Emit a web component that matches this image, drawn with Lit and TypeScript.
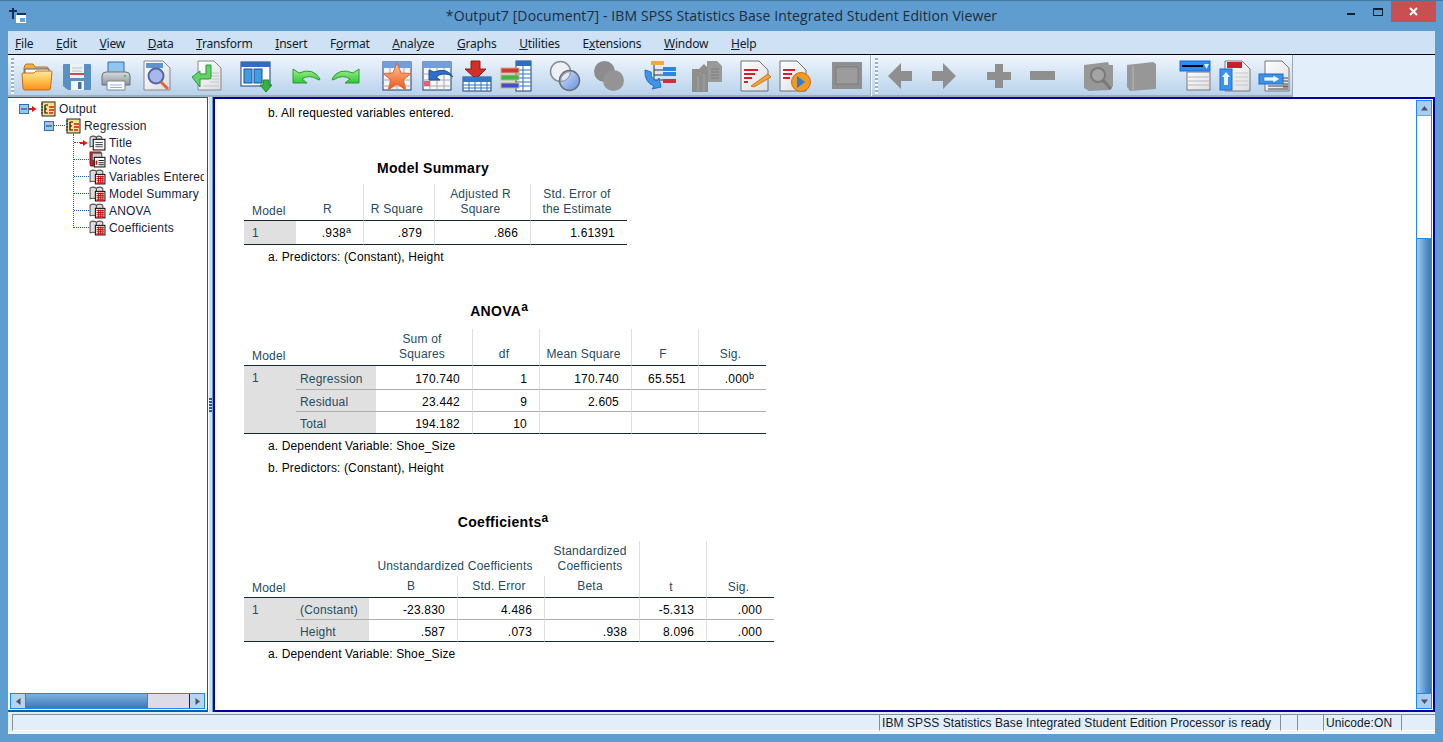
import { LitElement, html, css } from "lit";
import { customElement } from "lit/decorators.js";

const i32 = (body: unknown) => html`<svg class="ti" viewBox="0 0 32 32">${body}</svg>`;
const GR = "#8f8f8f";

const tools: { c: number; icon: unknown }[] = [
  { c: 37, icon: html`<svg class="ti" viewBox="0 0 32 32"><path d="M3 8l1-3q.5-1 2-1h6l2 3h12q1 0 1 1v6H3z" fill="#f4b52c" stroke="#b8761c"/><path d="M4 9h24v6H4z" fill="#fff" stroke="#2f5fd0"/><path d="M1 14q0-1 1-1h11l2-2h15q1 0 1 1l-1.500 16q0 2-2 2H4q-2 0-2-2z" fill="url(#fo)" stroke="#c66a14"/></svg>` },
  { c: 77, icon: html`<svg class="ti" viewBox="0 0 32 32"><path d="M3 4h26q1 0 1 1v24q0 1-1 1H7l-5-4V5q0-1 1-1z" fill="#5a8fc2"/><rect x="9" y="4" width="14" height="14" fill="#eef1f6"/><path d="M11 8h10M11 11h10" stroke="#b9c2cc"/><rect x="9" y="13" width="14" height="2" fill="#d8455a"/><rect x="10" y="21" width="13" height="9" fill="#f3f6fa"/><rect x="17" y="22" width="3.500" height="7" fill="#3f75aa"/></svg>` },
  { c: 116, icon: html`<svg class="ti" viewBox="0 0 32 32"><path d="M8 2h16v12H8z" fill="#8fc6f0" stroke="#3b6ea5"/><path d="M2 16q0-4 4-4h20q4 0 4 4v9H2z" fill="url(#pr)" stroke="#6b7177"/><rect x="24" y="15" width="2" height="2" fill="#4fc04f"/><path d="M7 21h18v9H7z" fill="#fff" stroke="#7d8489"/><path d="M10 25h12M10 27.500h12" stroke="#8ab4dc"/></svg>` },
  { c: 157, icon: html`<svg class="ti" viewBox="0 0 32 32"><path d="M3 1h19l7 7v22H3z" fill="url(#pa)" stroke="#85888c"/><rect x="5" y="3" width="17" height="5" fill="#5d93cf"/><circle cx="15" cy="16" r="7.500" fill="#a9b8ea" stroke="#5566a8" stroke-width="2"/><path d="M20 22l7 7" stroke="#e2653f" stroke-width="3"/></svg>` },
  { c: 207, icon: html`<svg class="ti" viewBox="0 0 32 32"><path d="M7 1h16l7 7v22H7z" fill="url(#pa)" stroke="#85888c"/><path d="M19 13h9M19 16h9M19 19h9M19 22h9M12 26h16" stroke="#c3c6ca"/><path d="M1 17l8-6v3h6V5h5v12q0 2-2 2h-9v8z" fill="#66d16b" stroke="#279a35"/></svg>` },
  { c: 256, icon: html`<svg class="ti" viewBox="0 0 32 32"><rect x="1" y="2" width="29" height="24" fill="#fff" stroke="#1d3f78"/><rect x="1" y="2" width="29" height="5" fill="#2f6dc0"/><rect x="4" y="9" width="8" height="14" fill="#3e9ee0" stroke="#1d4f98"/><rect x="14" y="9" width="8" height="14" fill="#3e9ee0" stroke="#1d4f98"/><path d="M23 20h6v5h3l-6 7-6-7h3z" fill="#35b23f" stroke="#1f8a2b"/></svg>` },
  { c: 306, icon: html`<svg class="ti" viewBox="0 0 32 32"><path d="M3 9v14h14l-5-4q7-5 16 0.500q2 1 2-.500Q23 7 9 13z" fill="url(#gr)" stroke="#2a9a30"/></svg>` },
  { c: 346, icon: html`<svg class="ti" viewBox="0 0 32 32"><path d="M29 9v14H15l5-4q-7-5-16 0.500q-2 1-2-.500Q9 7 23 13z" fill="url(#gr)" stroke="#2a9a30"/></svg>` },
  { c: 397, icon: html`<svg class="ti" viewBox="0 0 32 32"><rect x="2" y="2" width="28" height="28" fill="#f4f4f4" stroke="#1d3f78"/><rect x="2" y="2" width="28" height="6" fill="#6f9fdc"/><path d="M2 14h28M2 20h28M2 26h28M9 8v22M16 8v22M23 8v22" stroke="#a9a9a9"/><path d="M16 3l4 10 10 .500-8 6.500 3 10-9-6-9 6 3-10-8-6.500 10-.500z" fill="url(#st)" stroke="#d86a3a"/></svg>` },
  { c: 437, icon: html`<svg class="ti" viewBox="0 0 32 32"><rect x="2" y="2" width="28" height="28" fill="#f7f7f7" stroke="#1d3f78"/><rect x="2" y="2" width="28" height="6" fill="#6f9fdc"/><path d="M2 14h28M2 20h28M2 26h28M9 8v22M16 8v22M23 8v22" stroke="#a9a9a9"/><rect x="3" y="21" width="6" height="5" fill="#ea5c78"/><path d="M8 10v10h11l-4-3q6-5 14-2l3 2Q26 7 13 12z" fill="#2f6fd0" stroke="#1d4f98"/></svg>` },
  { c: 477, icon: html`<svg class="ti" viewBox="0 0 32 32"><path d="M10 1h9v8h6L15 19 4 9h6z" fill="#cf3028" stroke="#8f1c18"/><rect x="2" y="17" width="28" height="14" fill="#fff" stroke="#1d3f78"/><rect x="2" y="17" width="28" height="5" fill="#3277c8"/><path d="M2 25h28M2 28h28M8 22v9M14 22v9M20 22v9M26 22v9" stroke="#2d72c8"/></svg>` },
  { c: 516, icon: html`<svg class="ti" viewBox="0 0 32 32"><rect x="16" y="1" width="15" height="30" fill="#fff" stroke="#1d3f78"/><rect x="16" y="1" width="15" height="5" fill="#2f6dc0"/><path d="M16 10h15M16 14h15M16 18h15M16 22h15M16 26h15M23 6v25" stroke="#2d72c8"/><rect x="1" y="8" width="18" height="5" fill="#d8343c" stroke="#c9b27e"/><rect x="1" y="15" width="18" height="5" fill="#41b548" stroke="#c9b27e"/><rect x="1" y="23" width="18" height="5" fill="#3b52c8" stroke="#c9b27e"/></svg>` },
  { c: 565, icon: html`<svg class="ti" viewBox="0 0 32 32"><circle cx="11.500" cy="11.500" r="10" fill="#edf0f7" stroke="#878b91" stroke-width="1.500"/><circle cx="20.500" cy="20.500" r="10" fill="url(#ci)" stroke="#6b7078" stroke-width="1.500"/><path d="M11.500 21.500a10 10 0 0 1 10-10 10 10 0 0 1-10 10z" fill="#dfe6f5" stroke="#878b91"/></svg>` },
  { c: 609, icon: html`<svg class="ti" viewBox="0 0 32 32"><circle cx="11.500" cy="11.500" r="10.500" fill="#8c8c8c"/><circle cx="20.500" cy="20.500" r="10.500" fill="#949494"/></svg>` },
  { c: 660, icon: html`<svg class="ti" viewBox="0 0 32 32"><rect x="7" y="1" width="13" height="4" fill="#f4a93a"/><path d="M10 5v20M10 10h9M10 15h9M10 20h9" stroke="#333"/><rect x="19" y="7" width="13" height="4" fill="#2e86e0"/><rect x="19" y="12" width="13" height="4" fill="#2e86e0"/><rect x="19" y="19" width="13" height="4" fill="#c8303a"/><path d="M1 10q-1 12 9 16l-2 3 9-2-2-9-2 3q-6-1-6-9z" fill="#3d95e8" stroke="#2a6fc0"/></svg>` },
  { c: 707, icon: html`<svg class="ti" viewBox="0 0 32 32"><path d="M16 1h10l5 5v16H16z" fill="#999"/><path d="M20 9h8M20 12h8M20 15h8M20 18h8" stroke="#7c7c7c"/><path d="M1 9h7l5-5 4 4v24H1z" fill="#8e8e8e"/><path d="M7 16v15M13 14v17" stroke="#a6a6a6"/></svg>` },
  { c: 755, icon: html`<svg class="ti" viewBox="0 0 32 32"><path d="M2 1h18l9 9v21H2z" fill="url(#pa)" stroke="#6d7074"/><path d="M5 10h14M5 14h11M5 18h8M5 22h4" stroke="#d61f2c" stroke-width="2"/><path d="M12 26l17-12 3 3-17 10z" fill="#f2a23c" stroke="#c97a1c"/></svg>` },
  { c: 795, icon: html`<svg class="ti" viewBox="0 0 32 32"><path d="M1 1h17l9 9v21H1z" fill="url(#pa)" stroke="#6d7074"/><path d="M4 10h12M4 14h9M4 18h7" stroke="#d61f2c" stroke-width="2"/><circle cx="22" cy="22" r="9.500" fill="#f09a24" stroke="#c26f12"/><path d="M18 16l8 6-8 6z" fill="#2b7ed6"/></svg>` },
  { c: 847, icon: html`<svg class="ti" viewBox="0 0 32 32"><rect x="1" y="2" width="30" height="27" fill="#8f8f8f"/><rect x="5" y="7" width="22" height="17" fill="#9c9c9c" stroke="#7c7c7c"/></svg>` },
];
const tools2: { c: number; icon: unknown }[] = [
  { c: 900, icon: i32(html`<svg x="0" y="0" width="32" height="32" viewBox="0 0 32 32"><path d="M4 16L17 3v8h11v10H17v8z" fill="${GR}"/></svg>`) },
  { c: 944, icon: i32(html`<svg x="0" y="0" width="32" height="32" viewBox="0 0 32 32"><path d="M28 16L15 3v8H4v10h11v8z" fill="${GR}"/></svg>`) },
  { c: 999, icon: i32(html`<svg x="0" y="0" width="32" height="32" viewBox="0 0 32 32"><path d="M12 4h8v8h8v8h-8v8h-8v-8H4v-8h8z" fill="${GR}"/></svg>`) },
  { c: 1042, icon: i32(html`<svg x="0" y="0" width="32" height="32" viewBox="0 0 32 32"><rect x="4" y="11" width="25" height="9" fill="${GR}"/></svg>`) },
  { c: 1098, icon: html`<svg class="ti" viewBox="0 0 32 32"><path d="M2 5l24-3 1 3h4v21l-3 4-21 1-5-3z" fill="#979797"/><circle cx="16" cy="15" r="7" fill="#a4a4a4" stroke="#7a7a7a" stroke-width="2"/><path d="M21 20l8 9" stroke="#7a7a7a" stroke-width="3"/></svg>` },
  { c: 1141, icon: html`<svg class="ti" viewBox="0 0 32 32"><path d="M2 5l26-3 3 2v25l-26 2-3-4z" fill="#979797"/><path d="M8 6v24" stroke="#a8a8a8" stroke-width="2"/></svg>` },
  { c: 1195, icon: html`<svg class="ti" viewBox="0 0 32 32"><rect x="8" y="12" width="23" height="18" fill="url(#pa)" stroke="#777"/><path d="M8 17h23M8 21h23M8 25h23" stroke="#b8b8b8"/><rect x="1" y="1" width="30" height="10" fill="#2e8bf0" stroke="#1a6ad0"/><rect x="3" y="5" width="21" height="2" fill="#000"/><path d="M25 4h5l-2.500 5z" fill="#dfefff"/></svg>` },
  { c: 1235, icon: html`<svg class="ti" viewBox="0 0 32 32"><path d="M6 1h17l8 8v22H6z" fill="url(#pa)" stroke="#777"/><rect x="8" y="2" width="15" height="6" fill="#c8202a"/><path d="M16 13h13M16 17h13M16 21h13M16 25h13" stroke="#c8c8c8"/><rect x="1" y="9" width="12" height="21" fill="#3b93ee" stroke="#1a6ad0"/><path d="M7 12l4 5H9v8H5v-8H3z" fill="#e8f4ff"/></svg>` },
  { c: 1274, icon: html`<svg class="ti" viewBox="0 0 32 32"><path d="M7 1h17l7 7v23H7z" fill="url(#pa)" stroke="#777"/><path d="M25 18h5M25 21h5M25 24h5M25 27h5M10 26h20M10 29h20" stroke="#444"/><rect x="1" y="14" width="24" height="10" fill="#3b93ee" stroke="#1a6ad0"/><path d="M6 17h9v-2l7 4-7 4v-2H6z" fill="#e8f4ff" stroke="#1a6ad0" stroke-width=".5"/></svg>` },
];

const menu: [string, string, string][] = [
  ["", "F", "ile"], ["", "E", "dit"], ["", "V", "iew"], ["", "D", "ata"], ["", "T", "ransform"],
  ["", "I", "nsert"], ["F", "o", "rmat"], ["", "A", "nalyze"], ["", "G", "raphs"], ["", "U", "tilities"],
  ["E", "x", "tensions"], ["", "W", "indow"], ["", "H", "elp"],
];

const bookE = html`<svg class="tri" viewBox="0 0 16 16"><rect x="2" y="1" width="13" height="14" fill="#fbe08c" stroke="#222"/><path d="M3 3h-2M3 6h-2M3 9h-2M3 12h-2" stroke="#222"/><path d="M5 4v8h3M5 4h3M5 8h2" stroke="#111" fill="none" stroke-width="1.200"/><path d="M9 6h5M9 9h5M9 12h4" stroke="#e01818" stroke-width="1.600"/></svg>`;
const arrow = html`<svg class="arr" viewBox="0 0 8 8"><path d="M0 3h3V1l4.500 3L3 7V5H0z" fill="#ee1111"/></svg>`;
const exp = html`<svg class="exp" viewBox="0 0 10 10"><rect x=".5" y=".5" width="9" height="9" fill="#9cc6ee" stroke="#2f6fb8"/><path d="M2 5h6" stroke="#16365f"/></svg>`;
const leafT = html`<svg class="trl" viewBox="0 0 16 16"><path d="M1 3q3-2 6 0v9q-3-1-6 0z" fill="#ddd" stroke="#555"/><path d="M7 3q2-2 5 0v2H7z" fill="#ddd" stroke="#555"/><rect x="4" y="5" width="11" height="10" fill="#fff" stroke="#111"/><path d="M6 8h7M6 10h7M6 12h7" stroke="#555"/></svg>`;
const leafN = html`<svg class="trl" viewBox="0 0 16 16"><path d="M1 1h10v3H4v10H2q-1 0-1-2z" fill="#d82020" stroke="#801010"/><rect x="3" y="2" width="9" height="7" fill="#ccc" stroke="#555"/><rect x="5" y="6" width="10" height="9" fill="#fff" stroke="#111"/><path d="M7 9v4" stroke="#d01010" stroke-width="1.500"/><path d="M9 9h5M9 11h5M9 13h5" stroke="#222"/></svg>`;
const leafG = html`<svg class="trl" viewBox="0 0 16 16"><path d="M1 3q3-2 6 0v10q-3-1-6 0z" fill="#ddd" stroke="#555"/><path d="M7 3q3-2 6 0v4H7z" fill="#ddd" stroke="#555"/><rect x="6" y="6" width="9" height="9" fill="#fff" stroke="#111"/><path d="M7 8h7M7 10h7M7 12h7M7 14h7M9 7v8M11 7v8M13 7v8" stroke="#cc1414"/></svg>`;

const leaves: { icon: unknown; t: string; mark?: boolean }[] = [
  { icon: leafT, t: "Title", mark: true },
  { icon: leafN, t: "Notes" },
  { icon: leafG, t: "Variables Entered" },
  { icon: leafG, t: "Model Summary" },
  { icon: leafG, t: "ANOVA" },
  { icon: leafG, t: "Coefficients" },
];

@customElement("app-root")
export class AppRoot extends LitElement {
  static styles = css`
    :host { display: block; width: 1443px; height: 742px; overflow: hidden; }
    * { box-sizing: border-box; }
    .win { width: 1443px; height: 742px; display: flex; flex-direction: column; background: #5f9dd1; padding: 0 8px 8px; border-top: 1px solid #47799f; font-family: "Liberation Sans", Arial, sans-serif; font-size: 12px; color: #000; }
    .defs { width: 0; height: 0; display: block; }
    .title { height: 30px; flex: none; display: flex; align-items: flex-start; margin: 0 -8px; padding-left: 9px; }
    .appicon { width: 18px; height: 18px; margin-top: 6px; flex: none; }
    .tt { flex: 1; text-align: center; font: 14px/30px "Open Sans", "Noto Sans", sans-serif; color: #1d2c3a; padding-left: 88px; letter-spacing: .1px; }
    .wb { display: flex; align-items: flex-start; width: 108px; flex: none; margin-right: 7px; }
    .wmin { width: 18px; height: 3px; margin: 12px 0 0 14px; flex: none; }
    .wmin i { display: block; width: 8px; height: 2px; background: #14202c; margin-left: 5px; }
    .wmax { width: 10px; height: 8px; border: 1px solid #14202c; border-top-width: 2px; margin: 7px 8px 0 13px; flex: none; }
    .wx { width: 45px; height: 21px; background: #c75050; color: #fff; display: flex; align-items: center; justify-content: center; flex: none; }
    .wx svg { width: 9px; height: 9px; }
    .menu { height: 24px; flex: none; background: #cfe1f5; border-bottom: 1px solid #000; display: flex; gap: 22.7px; padding: 5px 0 0 7px; font: 12px/15px "Noto Sans", sans-serif; letter-spacing: -.2px; color: #111c2e; }
    .bar { height: 42px; flex: none; display: flex; background: #e3eefb; }
    .tools { width: 1285px; flex: none; display: flex; align-items: center; padding-top: 1px; background: linear-gradient(#f0f6fd, #b8d2eb); border-right: 1px solid #9ba8b5; border-bottom: 2px solid #a4aeb8; }
    .grip { width: 3px; height: 36px; margin-left: 3px; flex: none; background: repeating-linear-gradient(#9fb0c0 0 2px, #f8fbff 2px 4px); }
    .ti { width: 32px; height: 32px; flex: none; display: block; }
    .sep { width: 2px; height: 41px; background: #fafcff; border-left: 1px solid #9fb0c0; flex: none; }
    .main { flex: 1; min-height: 0; display: flex; }
    .left { width: 200px; flex: none; background: #fff; border-bottom: 2px solid #0a5ea8; border-right: 1px solid #0a5ea8; border-top: 1px solid #0a5ea8; display: flex; flex-direction: column; }
    .tree { flex: 1; min-height: 0; padding-top: 2px; color: #171c3a; overflow: hidden; letter-spacing: .2px; }
    .tr { height: 17px; display: flex; align-items: center; white-space: nowrap; overflow: hidden; }
    .exp { width: 10px; height: 10px; flex: none; }
    .arr { width: 8px; height: 8px; flex: none; }
    .tri { width: 16px; height: 16px; flex: none; }
    .trl { width: 17px; height: 17px; flex: none; }
    .r0 { padding-left: 11px; }
    .r0 .tri { margin: 0 3px 0 3px; }
    .r1 { padding-left: 36px; }
    .r1 .dots { width: 11px; }
    .r1 .tri { margin-right: 3px; }
    .dots { border-top: 1px dotted #2060b0; height: 0; flex: none; }
    .leafs { margin-left: 65px; border-left: 1px dotted #2060b0; height: 94px; margin-bottom: -8px; }
    .lf { height: 17px; display: flex; align-items: center; white-space: nowrap; width: 130px; overflow: hidden; }
    .lf .dots { width: 15px; }
    .lf .dots.s { width: 6px; }
    .lf .trl { margin: 0 3px 0 0; }
    .lf .arr { margin-right: 1px; }
    .hs { height: 16px; flex: none; margin: 0 2px 1px 2px; display: flex; border: 1px solid #1a8af0; background: #dcdbe6; }
    .hb { width: 14px; flex: none; background: #b7d3ee; display: flex; align-items: center; justify-content: center; }
    .hthumb { width: 123px; flex: none; background: linear-gradient(#7fb1e0, #5c95ca 50%, #3a78b9); border-left: 1px solid #1a8af0; border-right: 1px solid #1a8af0; }
    .htrack { flex: 1; border-right: 1px solid #223; }
    .split { width: 5px; flex: none; background: #cfe1f5; border-left: 1px solid #fff; border-right: 1px solid #5f9dd1; display: flex; align-items: center; }
    .split i { display: block; width: 3px; height: 14px; background: repeating-linear-gradient(#1f5d9c 0 2px, #cfe1f5 2px 3px); }
    .right { flex: 1; min-width: 0; background: #fff; border: 2px solid #0000a0; display: flex; padding: 1px; }
    .doc { flex: 1; min-width: 0; padding: 6px 0 0 28px; overflow: hidden; }
    .vs { width: 16px; flex: none; display: flex; flex-direction: column; border: 1px solid #1a8af0; background: #fff; }
    .vb { height: 14px; flex: none; background: #a9cdf2; display: flex; align-items: center; justify-content: center; }
    .vb svg, .hb svg { display: block; }
    .vtrack { height: 123px; flex: none; background: #fff; border-top: 1px solid #7ab; }
    .vthumb { flex: 1; background: linear-gradient(90deg, #a7cbec, #4f8cc5 70%, #3a78b9); border-top: 1px solid #1a8af0; border-bottom: 1px solid #1a8af0; }
    .note { height: 15px; line-height: 15px; padding-left: 24px; color: #010205; letter-spacing: .13px; white-space: nowrap; }
    .fn { margin-top: 5px; }
    .n2 { margin-top: 7px; }
    .h { font-weight: 700; font-size: 14px; line-height: 16px; height: 16px; text-align: center; color: #010205; white-space: nowrap; padding-right: 5px; letter-spacing: .3px; }
    .h sup { font-size: 12px; line-height: 0; vertical-align: 5px; letter-spacing: 0; }
    .hMS { margin-top: 39px; margin-bottom: 8px; width: 383px; }
    .hAN { margin-top: 38px; margin-bottom: 10px; width: 522px; padding-right: 12px; }
    .hCO { margin-top: 38px; margin-bottom: 11px; width: 530px; padding-right: 12px; }
    table { border-collapse: separate; border-spacing: 0; table-layout: fixed; letter-spacing: .2px; }
    th { font-weight: 400; color: #264a60; line-height: 15px; padding: 0 4px 3px 0; text-align: center; vertical-align: bottom; white-space: nowrap; border-right: 1px solid #e0e0e0; border-bottom: 1px solid #152935; }
    th.l { text-align: left; padding-left: 8px; padding-bottom: 1px; border-right: 0; }
    th.low { padding-bottom: 2px; }
    th.nb, td.nb, th:last-child, td:last-child { border-right: 0; }
    th.nbb { border-bottom: 0; }
    td { color: #010205; text-align: right; padding: 3px 12px 0 0; border-right: 1px solid #e0e0e0; border-bottom: 1px solid #aeaeae; line-height: 15px; white-space: nowrap; }
    tr:last-child td { border-bottom-color: #152935; }
    td.m, td.lb { text-align: left; color: #264a60; background: #e0e0e0; border-right: 0; }
    td.m { padding-left: 8px; vertical-align: top; padding-top: 5px; border-bottom-color: #152935; }
    td.lb { padding-left: 4px; border-bottom-color: #aeaeae; }
    tr:last-child td.lb { border-bottom-color: #152935; }
    tr.ms td { padding-top: 1px; vertical-align: middle; }
    td sup { font-size: 9px; line-height: 0; vertical-align: 4px; letter-spacing: 0; }
    .status { height: 22px; flex: none; background: #e3eefb; display: flex; padding: 2px 0 1px 4px; border-bottom: 2px solid #f4f8fd; }
    .sc { border-left: 1px solid #8a8f94; border-top: 1px solid #8a8f94; border-bottom: 1px solid #fff; line-height: 16px; padding-left: 2px; white-space: nowrap; color: #101828; letter-spacing: .08px; flex: none; }
    .grow { flex: 1; }
  `;

  private place(list: { c: number; icon: unknown }[], start: number) {
    let x = start;
    return list.map((t) => {
      const m = t.c - 16 - x;
      x = t.c + 16;
      return html`<div style="margin-left:${m}px">${t.icon}</div>`;
    });
  }

  private tri(d: string) {
    return html`<svg width="9" height="9" viewBox="0 0 9 9"><path d="${d}" fill="#4a5560"/></svg>`;
  }

  render() {
    return html`<div class="win">
      <svg class="defs">
        <defs>
          <linearGradient id="fo" x1="0" y1="0" x2="0" y2="1"><stop offset="0" stop-color="#ffe9a0"/><stop offset=".5" stop-color="#ffc24e"/><stop offset="1" stop-color="#fb8d1e"/></linearGradient>
          <linearGradient id="pr" x1="0" y1="0" x2="0" y2="1"><stop offset="0" stop-color="#d6dbe0"/><stop offset="1" stop-color="#8d949b"/></linearGradient>
          <linearGradient id="pa" x1="0" y1="0" x2="1" y2="1"><stop offset="0" stop-color="#fff"/><stop offset="1" stop-color="#dcdde0"/></linearGradient>
          <linearGradient id="gr" x1="0" y1="0" x2="0" y2="1"><stop offset="0" stop-color="#a2ee8c"/><stop offset="1" stop-color="#2fc83a"/></linearGradient>
          <linearGradient id="st" x1="0" y1="0" x2="0" y2="1"><stop offset="0" stop-color="#fbc9a0"/><stop offset="1" stop-color="#f2530e"/></linearGradient>
          <linearGradient id="ci" x1="0" y1="0" x2="1" y2="1"><stop offset="0" stop-color="#dbe6fa"/><stop offset="1" stop-color="#5f8fe0"/></linearGradient>
        </defs>
      </svg>
      <div class="title">
        <svg class="appicon" viewBox="0 0 18 18"><path d="M4 1v11M0 4h8" stroke="#10305a" stroke-width="2"/><path d="M8 6h9v2H8z" fill="#12345e"/><rect x="7" y="8" width="10" height="8" fill="#fff"/><rect x="11" y="11" width="5" height="4" fill="#6aa3d8"/></svg>
        <div class="tt">*Output7 [Document7] - IBM SPSS Statistics Base Integrated Student Edition Viewer</div>
        <div class="wb">
          <div class="wmin"><i></i></div>
          <div class="wmax"></div>
          <div class="wx"><svg viewBox="0 0 9 9"><path d="M1 1l7 7M8 1l-7 7" stroke="#fff" stroke-width="2"/></svg></div>
        </div>
      </div>
      <div class="menu">${menu.map((m) => html`<span>${m[0]}<u>${m[1]}</u>${m[2]}</span>`)}</div>
      <div class="bar">
        <div class="tools">
          <div class="grip"></div>
          ${this.place(tools, 14)}
          <div class="sep" style="margin-left:7px"></div>
          <div class="grip"></div>
          ${this.place(tools2, 878)}
        </div>
      </div>
      <div class="main">
        <div class="left">
          <div class="tree">
            <div class="tr r0">${exp}${arrow}${bookE}<span>Output</span></div>
            <div class="tr r1">${exp}<span class="dots"></span>${bookE}<span>Regression</span></div>
            <div class="leafs">
              ${leaves.map((l) => html`<div class="lf">
                ${l.mark ? html`<span class="dots s"></span>${arrow}` : html`<span class="dots"></span>`}
                ${l.icon}<span>${l.t}</span>
              </div>`)}
            </div>
          </div>
          <div class="hs">
            <div class="hb">${this.tri("M2 4.500L6.500 1v7z")}</div>
            <div class="hthumb"></div>
            <div class="htrack"></div>
            <div class="hb">${this.tri("M7 4.500L2.500 1v7z")}</div>
          </div>
        </div>
        <div class="split"><i></i></div>
        <div class="right">
          <div class="doc">
            <div class="note">b. All requested variables entered.</div>

            <div class="h hMS">Model Summary</div>
            <table style="width:383px">
              <colgroup><col style="width:52px"/><col style="width:68px"/><col style="width:71px"/><col style="width:96px"/><col style="width:96px"/></colgroup>
              <tr style="height:37px"><th class="l">Model</th><th>R</th><th>R Square</th><th>Adjusted R<br/>Square</th><th>Std. Error of<br/>the Estimate</th></tr>
              <tr class="ms" style="height:24px"><td class="m">1</td><td>.938<sup>a</sup></td><td>.879</td><td>.866</td><td>1.61391</td></tr>
            </table>
            <div class="note fn">a. Predictors: (Constant), Height</div>

            <div class="h hAN">ANOVA<sup>a</sup></div>
            <table style="width:522px">
              <colgroup><col style="width:52px"/><col style="width:80px"/><col style="width:97px"/><col style="width:67px"/><col style="width:92px"/><col style="width:67px"/><col style="width:67px"/></colgroup>
              <tr style="height:37px"><th class="l" colspan="2">Model</th><th>Sum of<br/>Squares</th><th>df</th><th>Mean Square</th><th>F</th><th>Sig.</th></tr>
              <tr style="height:24px"><td class="m" rowspan="3">1</td><td class="lb">Regression</td><td>170.740</td><td>1</td><td>170.740</td><td>65.551</td><td>.000<sup>b</sup></td></tr>
              <tr style="height:22px"><td class="lb">Residual</td><td>23.442</td><td>9</td><td>2.605</td><td></td><td></td></tr>
              <tr style="height:22px"><td class="lb">Total</td><td>194.182</td><td>10</td><td></td><td></td><td></td></tr>
            </table>
            <div class="note fn">a. Dependent Variable: Shoe_Size</div>
            <div class="note n2">b. Predictors: (Constant), Height</div>

            <div class="h hCO">Coefficients<sup>a</sup></div>
            <table style="width:530px">
              <colgroup><col style="width:52px"/><col style="width:73px"/><col style="width:89px"/><col style="width:87px"/><col style="width:95px"/><col style="width:67px"/><col style="width:67px"/></colgroup>
              <tr style="height:35px"><th class="l" colspan="2" rowspan="2">Model</th><th class="nb nbb" colspan="2" style="padding-bottom:2px">Unstandardized Coefficients</th><th class="nbb" style="padding-bottom:2px">Standardized<br/>Coefficients</th><th class="nbb"></th><th class="nbb"></th></tr>
              <tr style="height:22px"><th>B</th><th>Std. Error</th><th>Beta</th><th class="low">t</th><th class="low">Sig.</th></tr>
              <tr style="height:22px"><td class="m" rowspan="2">1</td><td class="lb">(Constant)</td><td>-23.830</td><td>4.486</td><td></td><td>-5.313</td><td>.000</td></tr>
              <tr style="height:22px"><td class="lb">Height</td><td>.587</td><td>.073</td><td>.938</td><td>8.096</td><td>.000</td></tr>
            </table>
            <div class="note fn">a. Dependent Variable: Shoe_Size</div>
          </div>
          <div class="vs">
            <div class="vb">${this.tri("M4.500 2L8 6.500H1z")}</div>
            <div class="vtrack"></div>
            <div class="vthumb"></div>
            <div class="vb">${this.tri("M4.500 7L8 2.500H1z")}</div>
          </div>
        </div>
      </div>
      <div class="status">
        <div class="sc grow"></div>
        <div class="sc" style="width:401px">IBM SPSS Statistics Base Integrated Student Edition Processor is ready</div>
        <div class="sc" style="width:17px"></div>
        <div class="sc" style="width:26px"></div>
        <div class="sc" style="width:78px">Unicode:ON</div>
        <div class="sc" style="width:34px"></div>
      </div>
    </div>`;
  }
}
